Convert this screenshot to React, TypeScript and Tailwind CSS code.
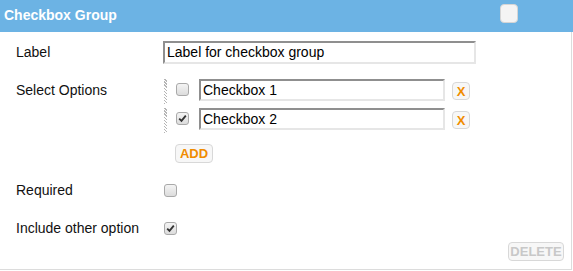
import React from "react";

function Box({ checked, className = "" }: { checked?: boolean; className?: string }) {
  return (
    <span
      className={
        "inline-flex w-[13px] h-[13px] items-center justify-center rounded-[3px] border border-[#a9a9a9] bg-[linear-gradient(#f4f4f4,#dcdcdc)] " +
        className
      }
    >
      {checked && (
        <svg width="9" height="9" viewBox="0 0 9 9">
          <path d="M1.2 4.6 L3.5 6.9 L7.8 1.6" fill="none" stroke="#333" strokeWidth="1.8" />
        </svg>
      )}
    </span>
  );
}

function TextBox({ value, className = "" }: { value: string; className?: string }) {
  return (
    <div
      className={
        "flex items-center border-2 border-t-[#8f8f8f] border-l-[#8f8f8f] border-r-[#e6e6e6] border-b-[#e6e6e6] bg-white pl-[2px] text-[14px] text-black " +
        className
      }
    >
      {value}
    </div>
  );
}

function SmallBtn({ children, className = "" }: { children: React.ReactNode; className?: string }) {
  return (
    <span
      className={
        "inline-flex items-center justify-center rounded-[4px] border border-[#d8d8d8] bg-[#f7f7f7] font-bold text-[13px] leading-none " +
        className
      }
    >
      {children}
    </span>
  );
}

function OptionRow({ label, checked }: { label: string; checked?: boolean }) {
  return (
    <div className="flex items-start h-[25px]">
      <div className="w-[3px] h-[25px] bg-[repeating-linear-gradient(45deg,#b5b5b5_0_1px,#ffffff_1px_2.2px)]" />
      <Box checked={checked} className="ml-[9px] mt-[4px]" />
      <TextBox value={label} className="ml-[10px] w-[246px] h-[22px]" />
      <SmallBtn className="ml-[7px] mt-[3px] w-[18px] h-[18px] text-[#f08c00]">X</SmallBtn>
    </div>
  );
}

export default function App() {
  return (
    <div className="w-[573px] h-[271px] bg-white font-['Liberation_Sans',Arial,sans-serif] text-[14px] leading-[21px] text-[#111]">
      <div className="h-[32px] bg-[#6cb3e4] flex items-start justify-between pl-[4px] pr-[55px]">
        <span className="text-white font-bold text-[14px] mt-[5px]">Checkbox Group</span>
        <span className="mt-[4px] w-[18px] h-[19px] rounded-[4px] border border-[#d5d5d5] bg-[#f4f4f4]" />
      </div>
      <div className="h-[238px] w-[572px] border-r border-b border-[#dcdcdc] pl-[16px]">
        <div className="flex items-center pt-[9px]">
          <div className="w-[147px]">Label</div>
          <TextBox value="Label for checkbox group" className="w-[313px] h-[23px]" />
        </div>
        <div className="flex mt-[15px]">
          <div className="w-[148px] mt-[1px]">Select Options</div>
          <div className="flex flex-col">
            <div className="flex flex-col gap-[4px]">
              <OptionRow label="Checkbox 1" />
              <OptionRow label="Checkbox 2" checked />
            </div>
            <SmallBtn className="ml-[11px] mt-[11px] w-[38px] h-[19px] text-[#f08c00]">ADD</SmallBtn>
          </div>
        </div>
        <div className="flex items-center mt-[17px]">
          <div className="w-[148px]">Required</div>
          <Box />
        </div>
        <div className="flex items-center mt-[17px]">
          <div className="w-[148px]">Include other option</div>
          <Box checked />
        </div>
        <div className="flex justify-end pr-[7px] mt-[3px]">
          <SmallBtn className="w-[56px] h-[19px] text-[#c8c8c8]">DELETE</SmallBtn>
        </div>
      </div>
    </div>
  );
}
